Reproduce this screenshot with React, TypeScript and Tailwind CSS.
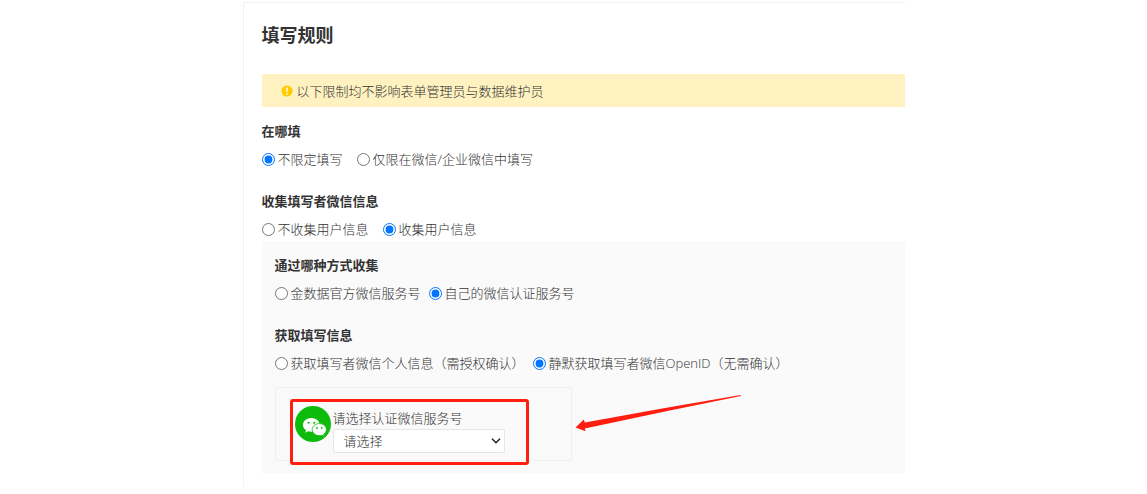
import type { ReactNode } from "react";

type Option = { value: string; label: string };

type RadioFieldProps = {
  name: string;
  title: string;
  options: Option[];
  defaultValue: string;
  compact?: boolean;
};

function RadioField({ name, title, options, defaultValue, compact }: RadioFieldProps) {
  return (
    <fieldset>
      <legend className="text-[13px] leading-5 font-bold text-[#333]">{title}</legend>
      <div className={`mt-2 flex flex-wrap ${compact ? "gap-x-2" : "gap-x-3.5"}`}>
        {options.map((option) => (
          <label key={option.value} className="flex items-center gap-[3px]">
            <input
              type="radio"
              name={name}
              value={option.value}
              defaultChecked={option.value === defaultValue}
              className="size-[13px] shrink-0"
            />
            <span>{option.label}</span>
          </label>
        ))}
      </div>
    </fieldset>
  );
}

function WarningIcon() {
  return (
    <svg viewBox="0 0 12 12" className="size-3 shrink-0" aria-hidden="true">
      <circle cx="6" cy="6" r="5.6" fill="#ffcc00" />
      <path d="M5.2 2.4h1.6l-.25 4.5h-1.1z" fill="#fff" />
      <circle cx="6" cy="8.8" r="0.85" fill="#fff" />
    </svg>
  );
}

function WeChatLogo() {
  return (
    <svg viewBox="0 0 36 36" className="size-9 shrink-0" aria-hidden="true">
      <circle cx="18" cy="18" r="18" fill="#0dbb0a" />
      <path
        d="M16.300 12C11.600 12 8 15 8 18.900c0 2.200 1.200 4.100 3.100 5.300l-.8 2.600 3-1.500c1 .3 2 .4 3 .4 4.700 0 8.400-3 8.400-6.800S21 12 16.300 12z"
        fill="#fff"
      />
      <circle cx="13.500" cy="16.700" r="1.050" fill="#0dbb0a" />
      <circle cx="19.200" cy="16.700" r="1.050" fill="#0dbb0a" />
      <path
        d="M24.300 17.600c-4 0-7.100 2.600-7.100 6s3.100 6 7.100 6c.9 0 1.800-.1 2.600-.4l2.400 1.300-.6-2.200c1.700-1.100 2.700-2.800 2.700-4.700 0-3.400-3.100-6-7.100-6z"
        fill="#fff"
        stroke="#0dbb0a"
        strokeWidth="0.8"
      />
      <circle cx="22" cy="22" r="0.9" fill="#0dbb0a" />
      <circle cx="26.700" cy="22" r="0.9" fill="#0dbb0a" />
    </svg>
  );
}

function Highlight({ children }: { children: ReactNode }) {
  return (
    <div className="relative">
      {children}
      <div className="pointer-events-none absolute -top-[7px] -right-6 -bottom-3 -left-[5px] rounded-[3px] border-3 border-[#ff1e10]" />
    </div>
  );
}

function PointerArrow() {
  return (
    <svg
      viewBox="0 0 168 38"
      className="pointer-events-none absolute top-1.5 left-full ml-1 h-[38px] w-[168px]"
      aria-hidden="true"
    >
      <path
        d="M0.500 33.500L8.800 25.500L9.800 28.600L90 14L165.500 0.900L165.800 2L90 17.600L9.800 34.400L10.500 37.300Z"
        fill="#ff1e10"
      />
    </svg>
  );
}

export default function App() {
  return (
    <main className="bg-white pt-[2px] pb-1.5 font-['Open_Sans','Noto_Sans_CJK_SC',sans-serif] text-[13px] leading-5 font-light text-[#333]">
      <section className="mx-auto max-w-[662px] border-t border-l border-[#f2f2f2] pt-[18px] pb-3.5 pl-[18px]">
        <h1 className="text-lg leading-7 font-bold text-[#333]">填写规则</h1>

        <div className="mt-[25px] flex h-[33px] items-center gap-1 rounded-l-[2px] bg-[#fff1c0] px-[19px]">
          <WarningIcon />
          <p>以下限制均不影响表单管理员与数据维护员</p>
        </div>

        <div className="mt-3.5 flex flex-col gap-[22px]">
          <RadioField
            name="place"
            title="在哪填"
            defaultValue="any"
            options={[
              { value: "any", label: "不限定填写" },
              { value: "wechat", label: "仅限在微信/企业微信中填写" },
            ]}
          />
          <RadioField
            name="collect"
            title="收集填写者微信信息"
            defaultValue="yes"
            options={[
              { value: "no", label: "不收集用户信息" },
              { value: "yes", label: "收集用户信息" },
            ]}
          />
        </div>

        <div className="mt-0.5 flex flex-col gap-[22px] bg-[#fafafa] px-[13px] pt-3.5 pb-3">
          <RadioField
            compact
            name="account"
            title="通过哪种方式收集"
            defaultValue="own"
            options={[
              { value: "official", label: "金数据官方微信服务号" },
              { value: "own", label: "自己的微信认证服务号" },
            ]}
          />
          <div>
            <RadioField
              compact
              name="scope"
              title="获取填写信息"
              defaultValue="silent"
              options={[
                { value: "profile", label: "获取填写者微信个人信息（需授权确认）" },
                { value: "silent", label: "静默获取填写者微信OpenID（无需确认）" },
              ]}
            />

            <div className="relative mt-3.5 flex w-[297px] rounded-[2px] border border-[#f0f0f0] pt-[18px] pb-[7px] pl-[19px]">
              <Highlight>
                <div className="flex items-start gap-0.5">
                  <WeChatLogo />
                  <div className="flex flex-col gap-px pt-0.5">
                    <label htmlFor="service-account">请选择认证微信服务号</label>
                    <div className="relative">
                      <select
                        id="service-account"
                        className="block h-6 w-[172px] appearance-none rounded-[2px] border border-[#e6e6e6] bg-white px-2.5 text-[13px] text-[#333]"
                      >
                        <option>请选择</option>
                      </select>
                      <svg
                        viewBox="0 0 10 6"
                        className="pointer-events-none absolute top-[9px] right-1 h-1.5 w-2.5"
                        fill="none"
                        stroke="#222"
                        strokeWidth="1.5"
                        aria-hidden="true"
                      >
                        <path d="M1 0.800L5 4.800L9 0.800" />
                      </svg>
                    </div>
                  </div>
                </div>
              </Highlight>
              <PointerArrow />
            </div>
          </div>
        </div>
      </section>
    </main>
  );
}
